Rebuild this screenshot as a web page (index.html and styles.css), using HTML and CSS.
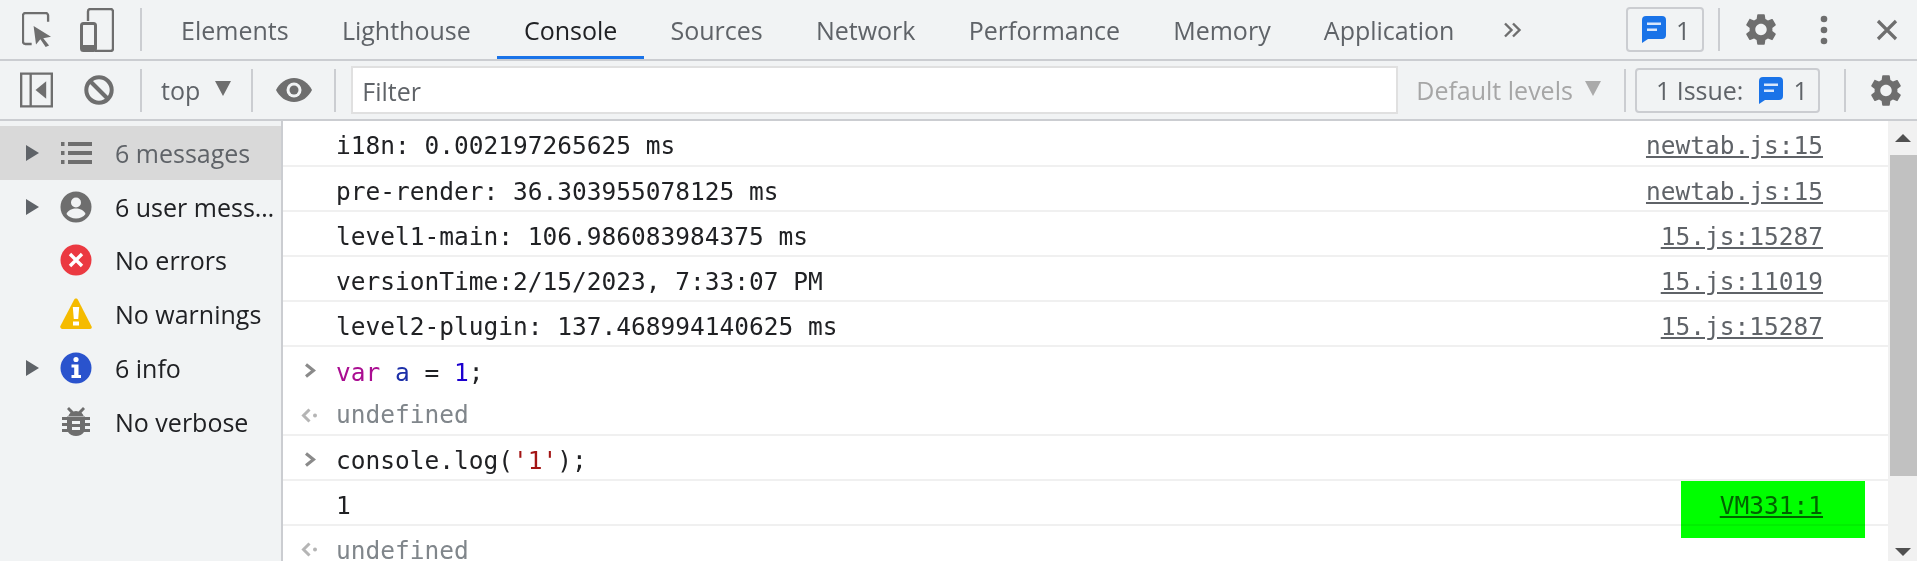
FILE: index.html
```html
<!DOCTYPE html>
<html lang="en">
<head>
<meta charset="utf-8">
<title>DevTools Console</title>
<link rel="stylesheet" href="styles.css">
</head>
<body>
<svg class="sprite" xmlns="http://www.w3.org/2000/svg">
  <symbol id="gear" viewBox="2.3 1.6 19.4 20.8"><path d="M19.14 12.94c.04-.3.06-.61.06-.94 0-.32-.02-.64-.07-.94l2.03-1.58c.18-.14.23-.41.12-.61l-1.92-3.32c-.12-.22-.37-.29-.59-.22l-2.39.96c-.5-.38-1.03-.7-1.62-.94l-.36-2.54c-.04-.24-.24-.41-.48-.41h-3.84c-.24 0-.43.17-.47.41l-.36 2.54c-.59.24-1.13.57-1.62.94l-2.39-.96c-.22-.08-.47 0-.59.22L2.74 8.87c-.12.21-.08.47.12.61l2.03 1.58c-.05.3-.09.63-.09.94s.02.64.07.94l-2.03 1.58c-.18.14-.23.41-.12.61l1.92 3.32c.12.22.37.29.59.22l2.39-.96c.5.38 1.03.7 1.62.94l.36 2.54c.05.24.24.41.48.41h3.84c.24 0 .44-.17.47-.41l.36-2.54c.59-.24 1.13-.56 1.62-.94l2.39.96c.22.08.47 0 .59-.22l1.92-3.32c.12-.22.07-.47-.12-.61l-2.01-1.58zM12 15.6c-1.98 0-3.6-1.62-3.6-3.6s1.62-3.6 3.6-3.6 3.6 1.62 3.6 3.6-1.62 3.6-3.6 3.6z" fill="#6e6e6e"/></symbol>
  <symbol id="bubble" viewBox="0 0 24 27"><path d="M4 0h16a4 4 0 0 1 4 4v15a4 4 0 0 1-4 4H6l-6 4V4a4 4 0 0 1 4-4z" fill="#1a73e8"/><path d="M5 6.500h14v2.600H5zM5 12.500h10v2.600H5z" fill="#d7e6fb"/></symbol>
  <symbol id="caret" viewBox="0 0 13 16"><path d="M0 0l13 8-13 8z" fill="#5f6368"/></symbol>
  <symbol id="prompt" viewBox="0 0 12 15"><path d="M2 1.500l7.500 6-7.500 6" fill="none" stroke="#8a8a8a" stroke-width="3.200"/></symbol>
  <symbol id="result" viewBox="0 0 17 15"><path d="M8.500 1.500L2.500 7.500l6 6" fill="none" stroke="#b5b5b5" stroke-width="3"/><circle cx="14" cy="7.500" r="2" fill="#b5b5b5"/></symbol>
</svg>

<header class="tabbar">
  <div class="tool-group">
    <svg class="ico-inspect" viewBox="0 0 30 36"><path d="M10 33H3.500A2.500 2.500 0 0 1 1 30.500V3.500A2.500 2.500 0 0 1 3.500 1h21A2.500 2.500 0 0 1 27 3.500V10" fill="none" stroke="#6e6e6e" stroke-width="2.400"/><path d="M12 14.500l18 11-8 1.500 6 7.500-3.500 1.500-5.500-8-4.500 5.500z" fill="#6e6e6e"/></svg>
    <svg class="ico-device" viewBox="0 0 34 44"><path d="M8 13V3.500A2.500 2.500 0 0 1 10.500 1h20A2.500 2.500 0 0 1 33 3.500v37a2.500 2.500 0 0 1-2.500 2.500H15" fill="none" stroke="#6e6e6e" stroke-width="2.400"/><rect x="1.500" y="15.500" width="14" height="27" rx="2" fill="none" stroke="#6e6e6e" stroke-width="3"/><path d="M1.500 39h14" stroke="#6e6e6e" stroke-width="4"/></svg>
  </div>
  <span class="sep sep-a"></span>
  <nav class="tabs">
    <span class="tab">Elements</span>
    <span class="tab">Lighthouse</span>
    <span class="tab active">Console</span>
    <span class="tab">Sources</span>
    <span class="tab">Network</span>
    <span class="tab">Performance</span>
    <span class="tab">Memory</span>
    <span class="tab">Application</span>
  </nav>
  <svg class="ico-more" viewBox="0 0 20 16"><path d="M2 1.500L8.500 8 2 14.500M10 1.500L16.500 8 10 14.500" fill="none" stroke="#6e6e6e" stroke-width="2.400"/></svg>
  <div class="tab-right">
    <button class="issue-btn"><svg class="ico-bubble"><use href="#bubble"/></svg><span>1</span></button>
    <span class="sep"></span>
    <svg class="ico-gear"><use href="#gear"/></svg>
    <svg class="ico-dots" viewBox="0 0 8 30"><circle cx="4" cy="4" r="3.300" fill="#6e6e6e"/><circle cx="4" cy="15" r="3.300" fill="#6e6e6e"/><circle cx="4" cy="26" r="3.300" fill="#6e6e6e"/></svg>
    <svg class="ico-close" viewBox="0 0 22 22"><path d="M2 2l18 18M20 2L2 20" stroke="#6e6e6e" stroke-width="3.200"/></svg>
  </div>
</header>

<div class="toolbar">
  <svg class="ico-dock" viewBox="0 0 34 36"><path d="M1.200 1.200h31.600v33.600H1.200zM11 1.200v33.600" fill="none" stroke="#6e6e6e" stroke-width="2.400"/><path d="M27 9v18l-11-9z" fill="#6e6e6e"/></svg>
  <svg class="ico-block" viewBox="0 0 30 30"><circle cx="15" cy="15" r="12.700" fill="none" stroke="#6e6e6e" stroke-width="4"/><path d="M6 6l18 18" stroke="#6e6e6e" stroke-width="4"/></svg>
  <span class="sep"></span>
  <span class="context">top</span>
  <span class="tri"></span>
  <span class="sep sep-strong"></span>
  <svg class="ico-eye" viewBox="0 0 36 24"><path d="M18 0C10 0 3.500 5 0 12c3.500 7 10 12 18 12s14.500-5 18-12C32.500 5 26 0 18 0z" fill="#6e6e6e"/><circle cx="18" cy="12" r="7.500" fill="#f1f3f4"/><circle cx="18" cy="12" r="4.500" fill="#6e6e6e"/></svg>
  <span class="sep"></span>
  <div class="filter">Filter</div>
  <span class="levels">Default levels</span>
  <span class="tri tri-muted"></span>
  <span class="sep"></span>
  <button class="issues"><span>1 Issue:</span><svg class="ico-bubble"><use href="#bubble"/></svg><span>1</span></button>
  <span class="sep"></span>
  <svg class="ico-gear"><use href="#gear"/></svg>
</div>

<main class="body">
  <aside class="sidebar">
    <div class="side-row selected">
      <svg class="caret"><use href="#caret"/></svg>
      <svg class="side-ico" viewBox="0 0 32 32"><path d="M1 5h3.500v4H1zM8 5h24v4H8zM1 14h3.500v4H1zM8 14h24v4H8zM1 23h3.500v4H1zM8 23h24v4H8z" fill="#6e6e6e"/></svg>
      <span class="side-label">6 messages</span>
    </div>
    <div class="side-row">
      <svg class="caret"><use href="#caret"/></svg>
      <svg class="side-ico" viewBox="0 0 32 32"><circle cx="16" cy="16" r="15.500" fill="#6e6e6e"/><circle cx="16" cy="11.500" r="5" fill="#f1f3f4"/><path d="M6.500 23c1.500-4 6-5.500 9.500-5.500s8 1.500 9.500 5.500c-2 2.800-5.500 4.500-9.500 4.500S8.500 25.800 6.500 23z" fill="#f1f3f4"/></svg>
      <span class="side-label">6 user mess…</span>
    </div>
    <div class="side-row">
      <span class="caret"></span>
      <svg class="side-ico" viewBox="0 0 32 32"><circle cx="16" cy="16" r="15.500" fill="#eb3941"/><path d="M10 10l12 12M22 10L10 22" stroke="#fff" stroke-width="3.400"/></svg>
      <span class="side-label">No errors</span>
    </div>
    <div class="side-row">
      <span class="caret"></span>
      <svg class="side-ico" viewBox="0 0 32 32"><path d="M16 0.500c.8 0 1.500.5 1.900 1.200l13.700 26.800c.5 1.100-.2 2.500-1.500 2.500H1.900C.6 30.500-.1 29.100.4 28L14.100 1.700C14.500 1 15.200.5 16 .5z" fill="#f5bb00"/><path d="M12.800 9h6.400l-1 12h-4.400zM13 23.500h6v4h-6z" fill="#fff"/></svg>
      <span class="side-label">No warnings</span>
    </div>
    <div class="side-row">
      <svg class="caret"><use href="#caret"/></svg>
      <svg class="side-ico" viewBox="0 0 32 32"><circle cx="16" cy="16" r="15.500" fill="#2a53cd"/><circle cx="16" cy="7.500" r="2.600" fill="#fff"/><path d="M11.500 12.500h7V23h2.500v3H11.500v-3h2.700v-7.500h-2.700z" fill="#fff"/></svg>
      <span class="side-label">6 info</span>
    </div>
    <div class="side-row">
      <span class="caret"></span>
      <svg class="side-ico" viewBox="0 0 32 32"><path d="M9 1l4.500 4.500a7 7 0 0 1 5 0L23 1l2 2-3.500 3.800c1 .9 1.700 1.900 2.200 3.200H8.300c.5-1.300 1.200-2.300 2.200-3.200L7 3zM2 11h5v-.5h18v.5h5v3h-5v3h5v3h-5v3h5v3h-6c-1.600 2.500-4.700 4-8 4s-6.400-1.500-8-4H2v-3h5v-3H2v-3h5v-3H2z" fill="#6e6e6e"/><path d="M12 15h8v3h-8zM12 21h8v3h-8z" fill="#f1f3f4"/></svg>
      <span class="side-label">No verbose</span>
    </div>
  </aside>

  <section class="console">
    <div class="msg"><span class="text">i18n: 0.002197265625 ms</span><a class="src">newtab.js:15</a></div>
    <div class="msg"><span class="text">pre-render: 36.303955078125 ms</span><a class="src">newtab.js:15</a></div>
    <div class="msg"><span class="text">level1-main: 106.986083984375 ms</span><a class="src">15.js:15287</a></div>
    <div class="msg"><span class="text">versionTime:2/15/2023, 7:33:07 PM</span><a class="src">15.js:11019</a></div>
    <div class="msg"><span class="text">level2-plugin: 137.468994140625 ms</span><a class="src">15.js:15287</a></div>
    <div class="msg msg-plain"><svg class="gutter"><use href="#prompt"/></svg><span class="text"><span class="kw">var</span> <span class="var">a</span> = <span class="num">1</span>;</span></div>
    <div class="msg msg-short"><svg class="gutter gutter-result"><use href="#result"/></svg><span class="text muted">undefined</span></div>
    <div class="msg"><svg class="gutter"><use href="#prompt"/></svg><span class="text">console.log(<span class="str">'1'</span>);</span></div>
    <div class="msg"><span class="text">1</span><a class="src">VM331:1</a></div>
    <div class="msg msg-plain msg-last"><svg class="gutter gutter-result"><use href="#result"/></svg><span class="text muted">undefined</span></div>
    <div class="highlight"></div>
  </section>

  <div class="scrollbar">
    <div class="arrow arrow-up"></div>
    <div class="thumb"></div>
    <div class="arrow arrow-down"></div>
  </div>
</main>
</body>
</html>
```

FILE: styles.css
```css
* { box-sizing: border-box; }
html, body { margin: 0; height: 561px; overflow: hidden; background: #fff; }
body {
  display: flex;
  flex-direction: column;
  font-family: "Open Sans", "Noto Sans", sans-serif;
  font-size: 25px;
  color: #202124;
}
.sprite { display: none; }
svg { display: block; flex: none; }

.tabbar {
  height: 61px;
  flex: none;
  display: flex;
  align-items: center;
  background: #f1f3f4;
  border-bottom: 2px solid #cbcdd1;
}
.tool-group { display: flex; align-items: center; gap: 29px; padding-left: 22px; }
.ico-inspect { width: 29px; height: 35px; }
.ico-device { width: 34px; height: 44px; }
.sep { width: 2px; height: 43px; background: #cbcdd1; flex: none; }
.sep-a { margin-left: 26px; }
.tabs { display: flex; height: 59px; margin-left: 12.5px; }
.tab {
  display: flex;
  align-items: center;
  padding: 0 26.6px;
  color: #5f6368;
  border-bottom: 3px solid transparent;
  border-top: 3px solid transparent;
  white-space: nowrap;
}
.tab.active { color: #202124; border-bottom-color: #1a73e8; }
.ico-more { width: 20px; height: 16px; margin-left: 22px; }
.tab-right { margin-left: auto; display: flex; align-items: center; }
.issue-btn {
  width: 78px; height: 45px;
  display: flex; align-items: center; gap: 10px;
  background: transparent;
  border: 2px solid #cbcdd1;
  border-radius: 4px;
  font: inherit;
  color: #5f6368;
  padding: 0 0 0 14px;
}
.ico-bubble { width: 24px; height: 27px; }
.tab-right .sep { margin-left: 14px; }
.ico-gear { width: 32px; height: 33px; }
.tab-right .ico-gear { margin-left: 25px; }
.ico-dots { width: 8px; height: 30px; margin-left: 43px; }
.ico-close { width: 22px; height: 22px; margin-left: 48px; margin-right: 19px; }

.toolbar {
  height: 60px;
  flex: none;
  display: flex;
  align-items: center;
  background: #f1f3f4;
  border-bottom: 2px solid #cbcdd1;
  padding: 0 14px 0 20px;
}
.ico-dock { width: 33px; height: 36px; }
.ico-block { width: 30px; height: 30px; margin-left: 31px; }
.toolbar .sep { margin: 0; }
.ico-block + .sep { margin-left: 26px; }
.context { margin-left: 19px; color: #5f6368; }
.tri {
  width: 0; height: 0;
  border-left: 8px solid transparent;
  border-right: 8px solid transparent;
  border-top: 15px solid #6e6e6e;
  margin-left: 15px;
  margin-top: -4px;
}
.tri-muted { border-top-color: #aaa; margin-left: 12px; }
.sep-strong { margin-left: 20px !important; }
.ico-eye { width: 36px; height: 24px; margin-left: 23px; }
.ico-eye + .sep { margin-left: 22px; }
.filter {
  width: 1047px; height: 48px;
  margin-left: 15px;
  background: #fff;
  border: 2px solid #e0e0e0;
  padding-left: 9px;
  line-height: 46px;
  color: #5f6368;
  flex: none;
}
.levels { margin-left: 18px; color: #a6a6a6; white-space: nowrap; }
.tri-muted + .sep { margin-left: 23px; }
.issues {
  width: 185px; height: 45px;
  margin-left: 9px;
  display: flex; align-items: center; gap: 16px;
  background: transparent;
  border: 2px solid #cbcdd1;
  border-radius: 4px;
  font: inherit;
  color: #5f6368;
  padding: 0 0 0 19px;
  flex: none;
}
.issues .ico-bubble { margin-right: -6px; }
.issues + .sep { margin-left: 24px; }
.toolbar .ico-gear { margin-left: 24px; }

.body { flex: 1; display: flex; min-height: 0; }
.sidebar {
  width: 283px;
  flex: none;
  background: #f1f3f4;
  border-right: 2px solid #cbcdd1;
  padding-top: 5px;
}
.side-row {
  height: 53.8px;
  display: flex;
  align-items: center;
  padding-left: 26px;
  white-space: nowrap;
}
.side-row.selected { background: #d9d9d9; }
.selected .side-label { color: #5f6368; }
.caret { width: 13px; height: 16px; flex: none; }
.side-ico { width: 32px; height: 32px; margin-left: 21px; }
.side-label { margin-left: 23px; color: #202124; }

.console {
  flex: 1;
  min-width: 0;
  position: relative;
  font-family: "DejaVu Sans Mono", monospace;
  font-size: 24.5px;
  color: #202124;
  background: #fff;
}
.msg {
  height: 45px;
  display: flex;
  align-items: center;
  border-bottom: 2px solid #f0f0f0;
  position: relative;
  padding: 5px 65px 0 53px;
  white-space: pre;
}
.msg:first-child { height: 46px; }
.msg-plain { border-bottom: 0; }
.msg-short { height: 44px; padding-top: 3px; }
.msg-last { padding-top: 3px; }
.src { margin-left: auto; color: #5f6368; text-decoration: underline; }
.muted { color: #80868b; }
.kw { color: #aa0d91; }
.var { color: #1c2fa8; }
.num { color: #1c00cf; }
.str { color: #a31515; }
.gutter { position: absolute; left: 21px; top: 16px; width: 12px; height: 15px; }
.gutter-result { left: 18px; width: 17px; }
.highlight {
  position: absolute;
  left: 1398px;
  top: 360px;
  width: 184px;
  height: 57px;
  background: #00ff00;
  mix-blend-mode: multiply;
}

.scrollbar {
  width: 29px;
  flex: none;
  background: #f1f1f1;
  display: flex;
  flex-direction: column;
  align-items: stretch;
}
.thumb { flex: 1; background: #c1c1c1; margin-left: 2px; }
.arrow { height: 34px; display: flex; align-items: center; justify-content: center; flex: none; }
.arrow::before {
  content: "";
  width: 0; height: 0;
  border-left: 8px solid transparent;
  border-right: 8px solid transparent;
}
.arrow-up::before { border-bottom: 8px solid #505050; }
.arrow-down { height: 85px; align-items: flex-end; padding-bottom: 5px; }
.arrow-down::before { border-top: 8px solid #505050; }
```
